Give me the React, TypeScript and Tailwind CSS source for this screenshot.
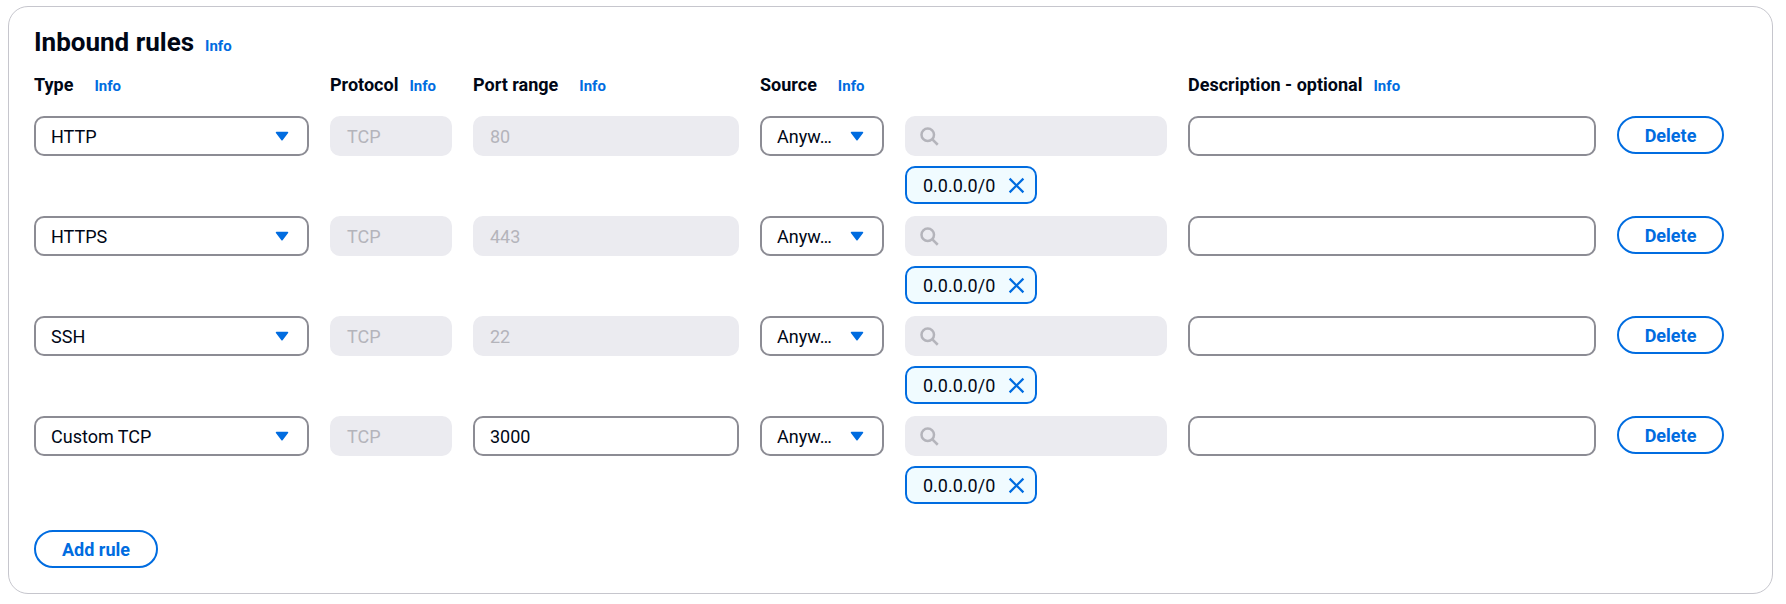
import React from 'react';

interface IRule {
  type: string;
  port: string;
  editable: boolean;
}

const rules: IRule[] = [
  { type: 'HTTP', port: '80', editable: false },
  { type: 'HTTPS', port: '443', editable: false },
  { type: 'SSH', port: '22', editable: false },
  { type: 'Custom TCP', port: '3000', editable: true },
];

const cols =
  'grid grid-cols-[275px_122px_266px_124px_262px_408px_107px] gap-x-[21px]';

const Caret: React.FC = () => (
  <svg width="14" height="10" viewBox="0 0 14 10" className="shrink-0">
    <path
      d="M1.5 1.5h11L7 8.8z"
      fill="#006ce0"
      stroke="#006ce0"
      strokeWidth="1.5"
      strokeLinejoin="round"
    />
  </svg>
);

const Info: React.FC<{ gap?: string }> = ({ gap = 'ml-[11px]' }) => (
  <span className={`${gap} text-[15px] font-bold text-[#006ce0]`}>Info</span>
);

const Label: React.FC<{ text: string; gap?: string }> = ({ text, gap }) => (
  <div className="flex items-baseline leading-[24px]">
    <span className="text-[18px] font-bold text-[#000716]">{text}</span>
    <Info gap={gap} />
  </div>
);

const Select: React.FC<{ value: string }> = ({ value }) => (
  <div className="flex h-[40px] items-center justify-between rounded-[10px] border-2 border-[#8c8c94] bg-white pl-[15px] pr-[18px] text-[18px] text-[#000716]">
    <span className="whitespace-nowrap">{value}</span>
    <Caret />
  </div>
);

const DisabledInput: React.FC<{ value: string }> = ({ value }) => (
  <div className="flex h-[40px] items-center rounded-[10px] border-2 border-[#ebebf0] bg-[#ebebf0] pl-[15px] text-[18px] text-[#b4b4bb]">
    {value}
  </div>
);

const TextInput: React.FC<{ value: string }> = ({ value }) => (
  <div className="flex h-[40px] items-center rounded-[10px] border-2 border-[#8c8c94] bg-white pl-[15px] text-[18px] text-[#000716]">
    {value}
  </div>
);

const SearchField: React.FC = () => (
  <div className="flex h-[40px] items-center rounded-[10px] border-2 border-[#ebebf0] bg-[#ebebf0] pl-[12px]">
    <svg width="20" height="20" viewBox="0 0 16 16" fill="none">
      <circle cx="7" cy="7" r="5" stroke="#b4b4bb" strokeWidth="2" />
      <path d="m15 15-4.5-4.5" stroke="#b4b4bb" strokeWidth="2" />
    </svg>
  </div>
);

const Chip: React.FC<{ value: string }> = ({ value }) => (
  <div className="flex h-[38px] w-[132px] items-center rounded-[10px] border-2 border-[#006ce0] bg-[#f0fbff] pl-[16px] text-[18px] text-[#000716]">
    <span>{value}</span>
    <svg width="17" height="17" viewBox="0 0 16 16" className="ml-[13px]">
      <path d="M1.5 1.5l13 13M14.5 1.5l-13 13" stroke="#006ce0" strokeWidth="2.1" />
    </svg>
  </div>
);

const PillButton: React.FC<{ text: string; width: string }> = ({ text, width }) => (
  <button
    className={`${width} flex h-[38px] items-center justify-center rounded-full border-2 border-[#006ce0] bg-white text-[18px] font-bold text-[#006ce0]`}
  >
    {text}
  </button>
);

const App: React.FC = () => {
  return (
    <div className="h-[604px] w-[1786px] bg-white pl-[8px] pt-[6px] font-['Roboto',sans-serif]">
      <section className="h-[588px] w-[1765px] rounded-[20px] border border-[#c6c6cd] px-[25px] pt-[20px]">
        <div className="flex items-baseline leading-[30px]">
          <h2 className="text-[26px] font-bold text-[#000716]">Inbound rules</h2>
          <Info />
        </div>

        <div className={`${cols} mt-[12px]`}>
          <Label text="Type" gap="ml-[21px]" />
          <Label text="Protocol" />
          <Label text="Port range" gap="ml-[21px]" />
          <Label text="Source" gap="ml-[21px]" />
          <div />
          <Label text="Description - optional" />
          <div />
        </div>

        <div className="mt-[18px] flex flex-col gap-y-[12px]">
          {rules.map((rule) => (
            <div key={rule.type} className={`${cols} items-start`}>
              <Select value={rule.type} />
              <DisabledInput value="TCP" />
              {rule.editable ? (
                <TextInput value={rule.port} />
              ) : (
                <DisabledInput value={rule.port} />
              )}
              <Select value="Anyw…" />
              <div className="flex flex-col gap-y-[10px]">
                <SearchField />
                <Chip value="0.0.0.0/0" />
              </div>
              <div className="h-[40px] rounded-[10px] border-2 border-[#8c8c94] bg-white" />
              <PillButton text="Delete" width="w-[107px]" />
            </div>
          ))}
        </div>

        <div className="mt-[26px]">
          <PillButton text="Add rule" width="w-[124px]" />
        </div>
      </section>
    </div>
  );
};

export default App;
